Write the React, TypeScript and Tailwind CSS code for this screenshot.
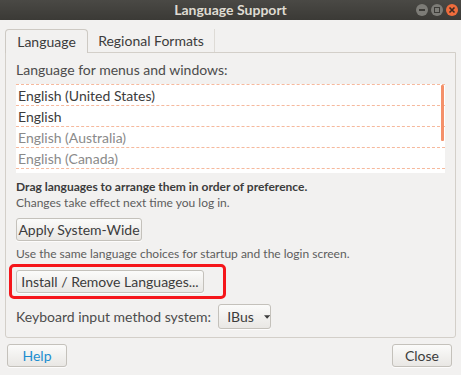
import { ReactNode } from 'react'

const font = { fontFamily: 'Lato, "Noto Sans", sans-serif' }

function GtkButton({ children, className = '' }: { children: ReactNode; className?: string }) {
  return (
    <div
      className={`flex items-center justify-center whitespace-nowrap rounded-[3px] border border-[#c4c1bb] bg-gradient-to-b from-[#fbfbfa] to-[#e9e7e4] shadow-[0_1px_0_rgba(255,255,255,0.8)] text-[14px] text-[#3c3c3c] ${className}`}
    >
      {children}
    </div>
  )
}

export default function App() {
  const languages = [
    { name: 'English (United States)', active: true },
    { name: 'English', active: true },
    { name: 'English (Australia)', active: false },
    { name: 'English (Canada)', active: false },
  ]

  return (
    <div className="w-[461px] h-[375px] bg-[#f2f1f0] flex flex-col overflow-hidden" style={font}>
      {/* Title bar */}
      <div className="h-[20px] bg-gradient-to-b from-[#4a4945] to-[#3b3a36] flex items-center relative">
        <span className="flex-1 text-center text-[14px] font-bold text-[#dfdbd2] leading-none">
          Language Support
        </span>
        <div className="absolute right-[3px] top-[4px] flex gap-[3px]">
          <div className="w-[12px] h-[12px] rounded-full bg-[#7d7c77] flex items-center justify-center">
            <div className="w-[6px] h-[2px] bg-[#3c3b37]" />
          </div>
          <div className="w-[12px] h-[12px] rounded-full bg-[#7d7c77] flex items-center justify-center">
            <div className="w-[6px] h-[6px] border border-[#3c3b37]" />
          </div>
          <div className="w-[12px] h-[12px] rounded-full bg-[#ef6c3c] flex items-center justify-center">
            <svg width="8" height="8" viewBox="0 0 8 8">
              <path d="M1.5 1.5 L6.5 6.5 M6.5 1.5 L1.5 6.5" stroke="#3c2a22" strokeWidth="1.6" />
            </svg>
          </div>
        </div>
      </div>

      {/* Tabs */}
      <div className="mt-[9px] mx-[5px] flex h-[23px] relative z-10">
        <div className="w-[83px] h-[24px] border border-b-0 border-[#cdc9c3] rounded-t-[4px] bg-[#f2f1f0] flex items-center justify-center text-[14px] text-[#3c3c3c]">
          Language
        </div>
        <div className="w-[127px] flex items-center justify-center text-[14px] text-[#3c3c3c] border-r border-[#dedbd6]">
          Regional Formats
        </div>
      </div>

      {/* Frame */}
      <div className="mx-[5px] h-[286px] border border-[#d3cfc9] rounded-b-[3px] flex flex-col px-[10px] pt-[8px]">
        <div className="text-[14px] leading-[18px] text-[#4c4c4c]">Language for menus and windows:</div>

        <div className="mt-[5px] h-[89px] bg-white border-t border-dashed border-[#f6b99d] relative flex flex-col">
          {languages.map((lang) => (
            <div
              key={lang.name}
              className={`h-[21px] border-b border-dashed border-[#f6b99d] flex items-center px-[2px] text-[14px] ${
                lang.active ? 'text-[#3c3c3c]' : 'text-[#8a8a8a]'
              }`}
            >
              {lang.name}
            </div>
          ))}
          <div className="absolute right-[1px] top-0 w-[3px] h-[56px] bg-[#f4906a] rounded-[1px]" />
        </div>

        <div className="mt-[6px] text-[12px] leading-[16px] font-bold text-[#3c3c3c]">
          Drag languages to arrange them in order of preference.
        </div>
        <div className="text-[12px] leading-[16px] text-[#5d5d5d]">Changes take effect next time you log in.</div>

        <GtkButton className="mt-[7px] w-[126px] h-[23px]">Apply System-Wide</GtkButton>

        <div className="mt-[5px] text-[12px] leading-[16px] text-[#5d5d5d]">
          Use the same language choices for startup and the login screen.
        </div>

        <div className="relative mt-[8px] w-[188px]">
          <GtkButton className="w-[188px] h-[23px]">Install / Remove Languages...</GtkButton>
          <div className="absolute left-[-7px] top-[-6px] w-[217px] h-[35px] border-[3px] border-[#f5151a] rounded-[5px]" />
        </div>

        <div className="mt-[11px] flex items-center gap-[7px]">
          <span className="text-[14px] text-[#4c4c4c]">Keyboard input method system:</span>
          <GtkButton className="w-[53px] h-[25px] justify-start pl-[8px] gap-[10px]">
            <span>IBus</span>
            <svg width="7" height="4" viewBox="0 0 7 4">
              <path d="M0 0 L7 0 L3.5 4 Z" fill="#3c3c3c" />
            </svg>
          </GtkButton>
        </div>
      </div>

      {/* Bottom buttons */}
      <div className="mt-[6px] mx-[7px] flex justify-between">
        <GtkButton className="w-[60px] h-[23px]">
          <span className="text-[#1c8ed0]">Help</span>
        </GtkButton>
        <GtkButton className="w-[60px] h-[23px] mr-[2px]">Close</GtkButton>
      </div>
    </div>
  )
}
